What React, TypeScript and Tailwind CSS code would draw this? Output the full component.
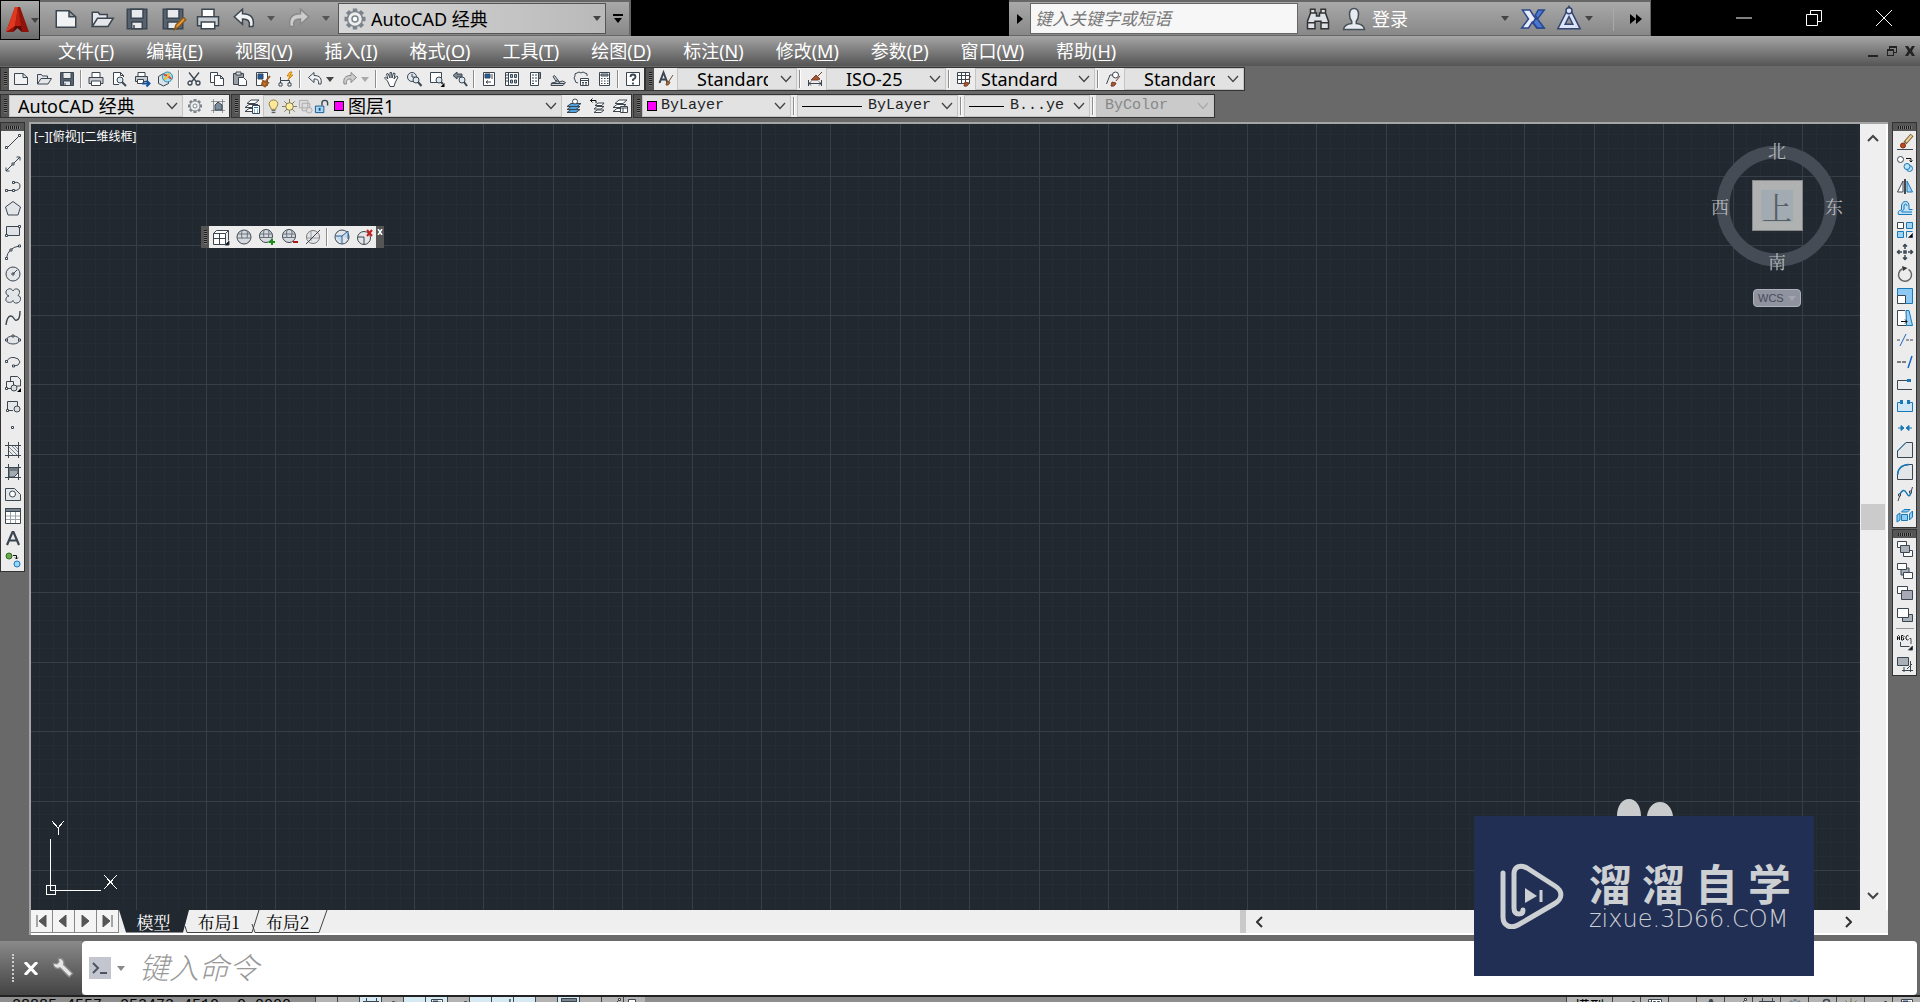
import { ReactNode } from 'react';

type IconProps = { name: string; size?: number };

const D = '#3b4650';
const B = '#1878b8';

// Icons are drawn on a 16x16 grid
const icons: Record<string, ReactNode> = {
    new: <path d="M1.500 2.500h8.500l4.500 4v7h-13zM10 2.500v4h4.500" fill="#f1f2f4" />,
    open: <path d="M1.500 13V3.500h4l1 1.500h5v2.500M1.500 13l3.500-5.500h10.500L12 13z" fill="#e4e6ea" />,
    save: <><path d="M1.500 1.500h13v13h-13z" fill="#56626e" /><path d="M4 1.500h8v6H4zM4.500 10h7v4.500h-7z" fill="#e8eaee" /><path d="M6 12v2" /></>,
    saveas: <><path d="M1.500 1.500h13v13h-13z" fill="#56626e" /><path d="M4 1.500h8v6H4zM4.500 10h7v4.500h-7z" fill="#e8eaee" /><path d="M9 15l1-3 5-5 1.500 1.500-5 5z" fill="#f0a030" stroke="#8a5a20" /></>,
    print: <><path d="M4 6V1.500h8V6" fill="#fff" /><path d="M1 6.500h14v6H1z" fill="#c9cdd2" /><path d="M3.500 10h9v4.500h-9z" fill="#fff" /></>,
    preview: <><path d="M8 13.500H2.500v-12h7l3 3V6M9.500 1.500v3h3" fill="#fff" /><circle cx="9" cy="9" r="3" fill="#dbe8f2" /><path d="M11 11l4 4" strokeWidth="2" /></>,
    publish: <><path d="M4 5V1.500h7V5" fill="#fff" /><path d="M1.500 5.500h12v5h-12z" fill="#c9cdd2" /><path d="M3.500 8.500h6v4h-6z" fill="#fff" /><path d="M8 12.500h7M12.500 9.500l3 3-3 3" stroke="#1353a0" strokeWidth="2" /></>,
    dwf: <><path d="M1.500 5.500l5-3 5 3v7l-5 2.500-5-2.500z" fill="#dbe3ea" /><circle cx="10.500" cy="6" r="5" fill="#a9dcec" stroke="#2b8ab0" /><path d="M7 4q4 0 7 4" stroke="#e2453c" strokeWidth="2" /><path d="M7 8q4-1 5-6" stroke="#e8c02c" strokeWidth="2" /></>,
    cut: <path d="M3 1.500l7.500 9.500M13 1.500L5.500 11M2 12a2 2 0 104 0 2 2 0 10-4 0M10 12a2 2 0 104 0 2 2 0 10-4 0" strokeWidth="1.300" />,
    copy: <><path d="M1.500 1.500h7v10h-7z" fill="#fff" /><path d="M5.500 4.500h6l3 3v7h-9zM11.500 4.500v3h3" fill="#fff" /></>,
    paste: <><path d="M1.500 2.500h10v11h-10z" fill="#9aa0a6" /><path d="M4 1h5v3H4z" fill="#ddd" /><path d="M6.500 6.500h5l3 3v5h-8z" fill="#fff" /></>,
    match: <><path d="M1.500 1.500h11v13h-11z" fill="#fff" /><path d="M3 3h5v5H3z" fill="#1e5aa5" /><path d="M15 5l-4 5M8 10l5 2-3 3.500-3-2z" stroke="#9c5a20" strokeWidth="2" fill="#c27a35" /></>,
    block: <><path d="M2.500 13V9.500h9V13M2.500 9.500V6" /><path d="M1 12h3v3H1zM10 12h3v3h-3z" fill="#fff" /><path d="M12 1l-3 4h3l-2 4 5-5h-3l2-3z" fill="#ffc83c" stroke="#d08010" /></>,
    undo: <path d="M1.500 6.500L7 1.500v3c6 0 8 3 7 8.500h-2.500c.5-3.500-.5-5-4.500-5v3.500z" fill="#f1f2f4" />,
    redo: <path d="M14.500 6.500L9 1.500v3c-6 0-8 3-7 8.500h2.500c-.5-3.500.5-5 4.500-5v3.500z" fill="#ccc" stroke="#888" />,
    hand: <path d="M4.500 10L1.500 7l1-1L5 8 3.500 3l1.500-.5L7 7V1.500h1.500L9 7l1.500-5 1.500.5L11 8l2.500-3 1.500 1-3 6-1 3.500H7z" fill="#fff" />,
    zoomrt: <><circle cx="6" cy="6" r="4.500" fill="#e2e9ef" /><path d="M6 3v3h3" /><circle cx="10" cy="9" r="3" fill="#dbe8f2" /><path d="M12 11l3.500 4" strokeWidth="2" /></>,
    zoomwin: <><path d="M1.500 1.500h11v10h-11z" fill="#fff" /><circle cx="10" cy="9" r="3" fill="#dbe8f2" /><path d="M12 11l2 2" strokeWidth="2" /><path d="M15.500 12v4h-4z" fill="#000" stroke="none" /></>,
    zoomprev: <><path d="M1 4.500L5 1v2h5v3H5v2z" fill="#7d8790" /><circle cx="10" cy="9" r="3" fill="#dbe8f2" /><path d="M12 11l3 4" strokeWidth="2" /></>,
    props: <><path d="M2.500 1.500h11v13h-11z" fill="#fff" /><path d="M4 3h5v4H4z" fill="#1e5aa5" /><path d="M11 3v5M5 11h5M7 9.500L5 11l2 1.500" /></>,
    center: <><path d="M1.500 1.500h13v13h-13zM4.500 1.500v13" fill="#fff" /><path d="M6.500 3.500h2v3h-2zM10.500 3.500h2v3h-2zM6.500 9h2v3h-2zM10.500 9h2v3h-2zM2 4h2M2 7h2M2 10h2" fill="#8fb5d8" /></>,
    palettes: <><path d="M3.500 1.500h8v13h-8z" fill="#fff" /><path d="M11.500 1.500h2v6h-2z" fill="#8a929a" /><path d="M5 4h2M8 4h2M5 7h2M8 7h2M5 10h2M8 10h2M5 12.500h2" /></>,
    sheets: <path d="M1 14.500h12l2.500-3-3-1.500-3 1-5-6.500-1.500 1 3.500 5.500-5 1zM2 12.500h12M6 9l4 3" fill="#ccd2d8" />,
    markup: <><path d="M4 2q2-2 4 0 2-2 4 0 3 0 2 3M4 2Q1 2 2 5q-2 2 0 4 0 3 3 3" /><path d="M7.500 7.500h8v7h-8zM7.500 9.500h8" fill="#fff" /><path d="M9 11.500h2M12 11.500h2M9 13h2M12 13h2" /></>,
    calc: <><path d="M3.500 1.500h10v13h-10z" fill="#fff" /><path d="M5 3h7v2H5z" fill="#9aa5b0" /><path d="M5 7.500h1.500M8 7.500h1.500M11 7.500h1.500M5 10h1.500M8 10h1.500M11 10h1.500M5 12.500h1.500M8 12.500h1.500M11 12.500h1.500" /></>,
    help: <><path d="M1.500 1.500h13v13h-13z" fill="#fff" /><path d="M5.500 6q0-2.500 2.500-2.500T10.500 6q0 1.500-2.500 2.500V10M8 11.500v2" strokeWidth="1.800" /></>,
    gear: <><path d="M8 1v2M8 13v2M1 8h2M13 8h2M3 3l1.500 1.500M11.500 11.500L13 13M13 3l-1.500 1.500M4.500 11.500L3 13" strokeWidth="3" stroke="#7b848c" /><circle cx="8" cy="8" r="5" fill="#eee" stroke="#7b848c" /><circle cx="8" cy="8" r="2" fill="#fff" stroke="#7b848c" /></>,
    workspace: <><path d="M1.500 3.500h13M1.500 12.500h13M3.500 1.500v13M12.500 1.500v13" strokeDasharray="1 1" /><path d="M5 12V7l3-3 4 3v5z" fill="#7d8c9a" /></>,
    layers: <><path d="M1 13.500l4-3h7l-4 3zM1 9.500l4-3h9l-4 3zM3 5.500L7 2h8l-4 3.500z" fill="#fff" /><path d="M8.500 7.500h7v8h-7z" fill="#fff" /><path d="M10 9.500h4M10 12h1M13 12h1M10 14h1M13 14h1" stroke={B} /></>,
    bulb: <><path d="M5.500 11q0-2-1.500-3.500Q2.500 5 4 3q1.500-2 4-2t4 2q1.500 2 0 4.500Q10.500 9 10.500 11z" fill="#ffe79a" stroke="#8a7a40" /><path d="M6 12.500h4M6 14.500h4" /></>,
    sun: <><path d="M8 0v16M0 8h16M2.500 2.500l11 11M13.500 2.500l-11 11" stroke="#7c7550" /><circle cx="8" cy="8" r="4" fill="#fff0a0" stroke="#7c7550" /></>,
    vpfreeze: <><path d="M1.500 1.500h9v8h-9zM4.500 4.500h8v8h-8z" fill="#ddd" stroke="#aaa" /><circle cx="12" cy="12" r="3" fill="#ddd" stroke="#aaa" /></>,
    unlock: <><path d="M8.500 7V4q0-2.500 3-2.500t3 2.500v3" strokeWidth="1.500" /><path d="M1.500 7.500h9v7h-9z" fill="#a6d7f7" stroke="#175487" /><path d="M6 9.500v3" stroke="#175487" strokeWidth="2" /></>,
    laycur: <><path d="M1 14.500l4-3h9l-4 3zM1 11.500l4-3h9l-4 3zM1 8.500l4-3h10l-4 3z" fill="#4ea3e0" /><circle cx="9" cy="3.500" r="2.500" fill="#fff" /></>,
    layprev: <><path d="M5 14.500l3-2.500h7l-3 2.500zM5 11l3-2.500h7L12 11zM6 7.500L9 5h6l-2 2.500z" fill="#fff" /><path d="M7 5V2.500H1M3.500 .5l-2 2 2 2" stroke="#111" /></>,
    laystate: <><path d="M1 13.500l4-3h7l-4 3zM1 9.500l4-3h9l-4 3zM3 5.500L7 2h8l-4 3.500z" fill="#fff" /><path d="M8.500 8.500h7v6h-7zM8.500 10h7M11 10v4" fill="#fff" /></>,
    textstyle: <><path d="M1.500 12L5.500 1.500 9.500 12M3 8.500h5" strokeWidth="2" /><path d="M15 4l-4 6M8 14l1-4 3 1q-1 4-4 3z" fill="#a46a3c" stroke="#79502e" /></>,
    dimstyle: <><path d="M1.500 9v6M14.500 9v6M2 12.500h12M4 10.500l-2 2 2 2M12 10.500l2 2-2 2" /><path d="M15 1l-4 4M4 9l5-5 4 4-2 1z" fill="#a4552c" stroke="#79402e" /></>,
    tablestyle: <><path d="M1.500 1.500h12v11h-12zM1.500 4.500h12M1.500 8.500h12M5.500 2v10M9.500 2v10" fill="#fff" /><path d="M15 5l-3 4M8 15l1-4 4 1q-1 4-5 3z" fill="#a4552c" stroke="#79402e" /></>,
    mlstyle: <><circle cx="10.500" cy="4" r="3" fill="#fff" /><path d="M1.500 13L5 4h3" /><path d="M15 5l-4 5M6 15l1-4 4 1q-1 4-5 3z" fill="#a4552c" stroke="#79402e" /></>,
    // draw toolbar
    line: <><path d="M2 14L14 2" /><path d="M.500 12.500h2v2h-2zM13.500 .500h2v2h-2z" fill="#fff" /></>,
    xline: <><path d="M1 15L15 1M1 11.500V15h3.500M11.500 1H15v3.500" /><path d="M7 7h2v2H7z" fill="#fff" /></>,
    pline: <><path d="M2 12.500h7M9 4.500q6-1 6 3.500t-6 4.500" /><path d="M.500 11.500h2v2h-2zM7.500 11.500h2v2h-2zM7.500 3.500h2v2h-2z" fill="#fff" /></>,
    polygon: <path d="M8 1.500l7.500 5.500L13 15H3L.5 7z" fill="#e3e6e9" />,
    rect: <><path d="M1.500 4.500h13v9h-13z" fill="#dfe3e7" /><path d="M.500 12.500h2v2h-2zM13.500 3.500h2v2h-2z" fill="#fff" /></>,
    arc: <><path d="M1.500 14Q3 4 14 2" /><path d="M.500 13.500h2v2h-2zM5 5h2v2H5zM13.500 1h2v2h-2z" fill="#fff" /></>,
    circle: <><circle cx="8" cy="8" r="7" fill="#e3e6e9" /><path d="M8 8l4-4M7 7h2v2H7z" fill="#fff" /></>,
    cloud: <path d="M8 3c1-3 7-3 6.500 1.500C14.500 6 13 7 13 7.500c4 1 3 7-1 7.500-2 .5-4-1-4-2.500C7 15 2 15 1 12.500.5 10 2 8 4 8 .5 7 0 3 2.500 1.500 5 0 7 1 8 3z" fill="#e3e6e9" />,
    spline: <path d="M1 15q1-9 5-9 1.500 0 3 2.500T12 10q3-1 3-9" strokeWidth="1.400" />,
    ellipse: <><ellipse cx="8" cy="8" rx="6.500" ry="4" fill="#e3e6e9" /><path d="M.500 7h2v2h-2zM7 3h2v2H7zM13.500 7h2v2h-2z" fill="#fff" /></>,
    ellarc: <><path d="M2 7q2-4 7-3.500T15 8q-1 4-6 4" /><path d="M.500 6.500h2v2h-2zM7.500 11h2v2h-2z" fill="#fff" /></>,
    insert: <><path d="M5.500 5V.500h7l3 3V10h-4M1.500 12.500v-7h7V9M2 12.500h4" /><circle cx="9" cy="12" r="3" fill="#ddd" /><path d="M.500 11.500h2v2h-2z" fill="#fff" /><path d="M16 12v4h-4z" fill="#000" stroke="none" /></>,
    mkblock: <><path d="M2.500 12.500v-9h10V8M2 12.500h6" fill="#e3e6e9" /><circle cx="12" cy="11" r="3" fill="#ddd" /><path d="M1.500 11.500h2v2h-2z" fill="#fff" /></>,
    point: <path d="M6.500 6.500h2v2h-2z" fill="#fff" />,
    hatch: <><path d="M0 3.500h16M0 13.500h16M3.500 0v16M13.500 0v16" /><path d="M4 5l8 8M4 9l4 4M7 4l6 6M10 4l3 3" stroke="#7f878e" /></>,
    gradient: <><path d="M0 3.500h16M0 13.500h16M3.500 0v16M13.500 0v16" /><path d="M4 4h9v5l-4 4H4z" fill="#a3abb2" /><path d="M4 4h9v3H4z" fill="#6f7a84" stroke="none" /></>,
    region: <><path d="M.500 2.500h9l6 6v6H.500z" fill="#e3e6e9" /><circle cx="7.500" cy="8" r="3" fill="#fff" /></>,
    table: <><path d="M.500 .500h15v15H.500z" fill="#fff" /><path d="M1 8h14M1 11.500h14M5.500 4v11M10.500 4v11" stroke="#9aa1a8" /><path d="M.500 .500h15v3H.500z" fill="#78838d" /></>,
    mtext: <path d="M2 15L7.500 2h1L14 15M4 10.500h8" strokeWidth="2.200" />,
    addsel: <><circle cx="4" cy="4" r="3" fill="#6aa84f" stroke="#2f6b1c" /><circle cx="12" cy="12" r="3" fill="#9ad6f8" stroke={B} /><path d="M8 3.500h3.500V7M10 5.500L11.500 7 13 5.500" stroke="#111" /></>,
    // modify toolbar
    erase: <><path d="M0 15.500h16" /><path d="M15 1L8 9" stroke="#7a5a34" strokeWidth="4" /><path d="M14.500 1.500L9 8" stroke="#ecd29a" strokeWidth="2" /><circle cx="6" cy="11.500" r="2.500" fill="#c0481f" stroke="#7b3010" /></>,
    mcopy: <><circle cx="3.500" cy="3.500" r="3" fill="#fff" /><path d="M9 2.500h5V6M12.500 4.500L14 6l1.500-1.500" stroke="#111" /><circle cx="12.500" cy="12.500" r="3" fill="#bfe3fa" stroke={B} /><circle cx="10" cy="10.500" r="3" fill="#bfe3fa" stroke={B} /></>,
    mirror: <><path d="M6 3v11H.500z" fill="#fff" /><path d="M10 3v11h5.500z" fill="#9fd3f5" stroke={B} /><path d="M8 1v15" stroke="#111" strokeWidth="1.500" /></>,
    offset: <path d="M15 14.500H1.500q-1.500-4 3-4.500V6Q5 1.500 8.500 1.500T12 6v3.500h3.500M15 12H5q-1.500 0 2-2.500V6q0-2 1.500-2T10 6" stroke={B} fill="#bfe3fa" />,
    array: <><path d="M.500 .500h6v6h-6z" fill="#fff" /><path d="M9.500 .500h6v6h-6zM.500 9.500h6v6h-6z" fill="#9fd3f5" stroke={B} /><path d="M9.500 15.500v-6h6" stroke={B} /><path d="M15.500 11.500v4h-4z" fill="#000" /></>,
    move: <path d="M8 0v5M8 11v5M0 8h5M11 8h5M6 2.500L8 .5l2 2M6 13.500l2 2 2-2M2.500 6L.5 8l2 2M13.500 6l2 2-2 2M7 7h2v2H7z" strokeWidth="1.500" />,
    rotate: <><path d="M5.500 2.800a6.500 6.500 0 106 .5" strokeWidth="1.500" stroke="#666" /><path d="M5 0l5.500 2L6 5z" fill="#333" stroke="none" /></>,
    scale: <><path d="M.500 .500h15v15h-15z" fill="#8dc9f2" stroke={B} /><path d="M.500 7.500h8v8h-8z" fill="#fff" /></>,
    stretch: <><path d="M8 .500H.500v15h9" fill="#fff" /><path d="M9 .500h3l3.500 15h-6z" fill="#9fd3f5" stroke={B} /><path d="M4 11.500h6M8 9.500l2 2-2 2" stroke="#111" /></>,
    trim: <><path d="M0 8h4M9 8h7" strokeDasharray="3 1" /><path d="M3 14l6-12" stroke="#1667c0" /></>,
    extend: <><path d="M0 8h10" strokeDasharray="4 1" stroke="#111" /><path d="M11 14l4-12" stroke="#1667c0" strokeWidth="1.500" /></>,
    breakpt: <><path d="M15 13.500H.500v-9h12" /><path d="M10 3h4v3h-4z" fill={B} stroke="none" /></>,
    breakk: <><path d="M3 4.500H.500v9h15v-9H13" fill="#cfe6f6" stroke={B} /><path d="M3 2h3v4H3zM10 2h3v4h-3z" fill={B} stroke="none" /></>,
    join: <path d="M1 8h5M10 8h5M4 5.500L7 8l-3 2.500zM12 5.500L9 8l3 2.500z" fill={B} stroke={B} />,
    chamfer: <><path d="M.500 9v6.500h15V.500H9L.500 9z" fill="#e3e6e9" /><path d="M.500 9L9 .500" stroke={B} /></>,
    fillet: <><path d="M.500 11v4.500h15V.500H12Q1 1 .500 11z" fill="#e3e6e9" /><path d="M.500 11Q1 1 12 .500" stroke={B} strokeWidth="1.500" /></>,
    blend: <><path d="M1 15L3 9M14 6l1.500-5" /><path d="M2.500 9q4-8 7-2t4.500-1" stroke={B} strokeWidth="1.500" /><path d="M1.500 8h2v2h-2zM12.500 5h2v2h-2z" fill="#fff" /></>,
    explode: <path d="M4.500 6.500h6v6h-6zM4.500 4L7 1.500h6L10.500 4zM12.500 6L15.500 3v6l-3 3zM0 7l3-2v7l-3 2z" fill="#8dcdf5" stroke={B} />,
    // draw order toolbar
    front: <><path d="M.500 .500h9v6h-9zM6.500 9.500h9v6h-9z" fill="#fff" /><path d="M3.500 4.500h9v7h-9z" fill="#a9b0b7" /></>,
    back: <><path d="M4 5h8v7H4z" fill="#a9b0b7" /><path d="M.500 .500h9v6h-9zM6.500 9.500h9v6h-9z" fill="#fff" /></>,
    above: <><path d="M.500 1.500h10v7h-10z" fill="#fff" /><path d="M4.500 5.500h11v9h-11z" fill="#a8a9b4" /></>,
    under: <><path d="M5.500 7.500h10v7h-10z" fill="#a9b0b7" /><path d="M.500 1.500h11v9h-11z" fill="#fff" /></>,
    abc: <><path d="M.500 6V2.500l1-1 1 1V6M.500 4h2M4.500 1.500V6H6l1-1-1-1.500L7 2.500l-1-1zM11.500 2l-1-.5-1.500 1V5l1.500 1 1-.5" stroke="#111" /><path d="M3.500 8v4.500h9M12.500 4.500H14V10" /><path d="M15.500 12v4h-4z" fill="#000" /></>,
    hatchback: <><path d="M.500 1.500h11v8h-11z" fill="#a9b0b7" /><path d="M5 14.500h11M13.500 5v11M7 11v5M10 13l5-5" /></>,
    // mesh toolbar
    box: <><path d="M.500 4.500h12v11H.500zM.500 4.500l3-3h12l-3 3M15.500 1.500v10M6.500 4.500v11M.500 9.500h12" fill="#fff" /><path d="M16 12v4h-4z" fill="#000" /></>,
    sphere: <><circle cx="8" cy="8" r="7" fill="#d6dade" /><path d="M2 5h12M1 9h14M6 1.500q-1 4 0 8M11 2q1 3 0 7" stroke="#66707a" /></>,
    sphereAdd: <><circle cx="7" cy="7" r="6.500" fill="#d6dade" /><path d="M1 5h12M1 8.500h12M5 1q-1 4 0 8M9.500 1q1 3 0 7" stroke="#66707a" /><path d="M13 10v6M10 13h6" stroke="#149014" strokeWidth="2" /></>,
    sphereSub: <><circle cx="7" cy="7" r="6.500" fill="#d6dade" /><path d="M1 5h12M1 8.500h12M5 1q-1 4 0 8M9.500 1q1 3 0 7" stroke="#66707a" /><path d="M11 13h5" stroke="#b01818" strokeWidth="2" /></>,
    sphereCut: <><circle cx="8" cy="8" r="6.500" fill="#e3e5e8" stroke="#777" /><path d="M2 9h12M6 2v10" stroke="#999" /><path d="M1 15L15 1" /></>,
    crease: <><circle cx="8" cy="8" r="7" fill="#e3e5e8" /><path d="M1 7h7v8M8 7l6-5V10" stroke="#2d5f95" fill="#c5d9ee" /></>,
    creaseDel: <><circle cx="7" cy="9" r="6.500" fill="#e3e5e8" /><path d="M1 8h6v7" /><path d="M10 1l5 6M15 1l-5 6" stroke="#c42020" strokeWidth="2" /></>,
    user: <path d="M8 1q3 0 3 4 0 3-1.500 4.500V11q5 .5 5.500 4H1q.5-3.500 5.500-4V9.500Q5 8 5 5q0-4 3-4z" fill="#e8ecf2" stroke="#455058" />,
    binoculars: <path d="M3 4V1.500h3V4h1v2h2V4h1V1.500h3V4l2 5.500v5h-5v-5H6v5H1v-5zM1 10.500h5M10 10.500h5M3 4h3M10 4h3" fill="#dfe3e8" stroke="#333" />,
    exchange: <><path d="M1 2h5l2.500 4L15 14h-4.500L7.500 10 5 14H.500L5 8z" fill="#e9eefa" stroke="#2a478e" /><path d="M15.500 2h-4L9.500 5.500 11 8zM9.500 8L8 10.500l3 3.500h4.500L11 8z" fill="#4a78d0" stroke="#2a478e" /></>,
    a360: <><path d="M8 3L3 13h10z" strokeWidth="4" stroke="#34456e" /><path d="M8 3L3 13h10z" strokeWidth="2" stroke="#dce4f8" /><circle cx="8" cy="2.500" r="2" fill="#dce4f8" stroke="#34456e" /></>,
    wrench: <path d="M1 4.500L3.500 5 5 3.500 4.500 1q3-.5 4 2 .5 1.500 0 2.500L15 12l-2.500 2.500L6 8Q3.500 9 2 7.500 .5 6 1 4.500z" fill="#e6e6e6" stroke="#888" />,
};

function Icon({ name, size = 16 }: IconProps) {
    return (
        <svg width={size} height={size} viewBox="0 0 16 16" fill="none" stroke={D} strokeWidth="1" className="shrink-0 overflow-visible">
            {icons[name]}
        </svg>
    );
}

function ToolButton({ name }: { name: string }) {
    return (
        <button type="button" aria-label={name} className="flex h-[22px] w-[23px] shrink-0 items-center justify-center">
            <Icon name={name} />
        </button>
    );
}

function Caret({ className = 'text-[#444]' }: { className?: string }) {
    return (
        <svg width="8" height="5" viewBox="0 0 8 5" className={`shrink-0 ${className}`}>
            <path d="M0 0h8L4 5z" fill="currentColor" />
        </svg>
    );
}

function Chevron({ className = 'text-[#444]' }: { className?: string }) {
    return (
        <svg width="12" height="8" viewBox="0 0 12 8" className={`pointer-events-none shrink-0 ${className}`} fill="none" stroke="currentColor">
            <path d="M1 1l5 5.500L11 1" strokeWidth="1.300" />
        </svg>
    );
}

function Grip({ vertical = false }: { vertical?: boolean }) {
    return vertical ? (
        <div className="flex h-2 w-full items-center justify-center bg-[#555]">
            <div className="h-[3px] w-[14px] bg-[repeating-linear-gradient(90deg,#1c1c1c_0_1px,#777_1px_2px)]" />
        </div>
    ) : (
        <div className="flex w-2 shrink-0 items-center justify-center self-stretch bg-[#555]">
            <div className="h-[14px] w-[3px] bg-[repeating-linear-gradient(#1c1c1c_0_1px,#777_1px_2px)]" />
        </div>
    );
}

function Divider() {
    return <div className="mx-[2px] h-[18px] w-[2px] shrink-0 border-l border-[#8d8d8d] bg-white" />;
}

function Bar({ children }: { children: ReactNode }) {
    return <div className="flex h-6 shrink-0 items-center border border-[#333] bg-[#ececec]">{children}</div>;
}

type ComboProps = { label: string; value: string; width: string; text: string; before?: ReactNode; disabled?: boolean };

function Combo({ label, value, width, text, before, disabled }: ComboProps) {
    return (
        <div className={`flex h-[22px] shrink-0 items-center border border-[#c4c4c4] pr-1 ${width} ${disabled ? 'bg-[#cacaca]' : 'bg-[#e2e2e2]'}`}>
            {before}
            <select aria-label={label} disabled={disabled} className={`h-5 min-w-0 flex-1 appearance-none overflow-hidden bg-transparent p-0 outline-none ${text}`}>
                <option>{value}</option>
            </select>
            <Chevron className={disabled ? 'text-[#aaa]' : 'text-[#444]'} />
        </div>
    );
}

const menus = [
    ['文件', 'F'], ['编辑', 'E'], ['视图', 'V'], ['插入', 'I'], ['格式', 'O'], ['工具', 'T'],
    ['绘图', 'D'], ['标注', 'N'], ['修改', 'M'], ['参数', 'P'], ['窗口', 'W'], ['帮助', 'H'],
];

const standardGroups = [
    ['new', 'open', 'save'],
    ['print', 'preview', 'publish', 'dwf'],
    ['cut', 'copy', 'paste', 'match', 'block'],
    ['undo', 'redo'],
    ['hand', 'zoomrt', 'zoomwin', 'zoomprev'],
    ['props', 'center', 'palettes', 'sheets', 'markup', 'calc'],
    ['help'],
];

const drawTools = [
    'line', 'xline', 'pline', 'polygon', 'rect', 'arc', 'circle', 'cloud', 'spline', 'ellipse',
    'ellarc', 'insert', 'mkblock', 'point', 'hatch', 'gradient', 'region', 'table', 'mtext', 'addsel',
];

const modifyTools = [
    'erase', 'mcopy', 'mirror', 'offset', 'array', 'move', 'rotate', 'scale', 'stretch', 'trim',
    'extend', 'breakpt', 'breakk', 'join', 'chamfer', 'fillet', 'blend', 'explode',
];

const uiFont = "font-['Noto_Sans','Noto_Sans_CJK_SC',sans-serif]";
const songFont = "font-['Liberation_Mono','Noto_Sans_CJK_SC',monospace]";

function TitleBar() {
    return (
        <header className="flex h-[36px] items-stretch bg-black">
            <button type="button" aria-label="AutoCAD" className="z-10 flex h-10 w-10 shrink-0 items-center gap-px border border-black bg-linear-to-b from-[#aaa] to-[#6c6c6c] pl-1">
                <svg width="25" height="28" viewBox="0 0 25 28">
                    <path d="M10 1h5l9 25h-7l-4.500-4L8 26H1z" fill="#8f130b" />
                    <path d="M10 1h3l-3 19L1 26z" fill="#e0371f" />
                    <path d="M13 1l3 19-6 0z" fill="#b81f10" />
                    <path d="M8 26l2-6h6l1 6-4.500-4z" fill="#5c0a05" />
                </svg>
                <Caret />
            </button>
            <div className="flex h-[36px] w-[591px] shrink-0 items-center border-t-2 border-r-2 border-b border-[#666] bg-linear-to-b from-[#a9a9a9] to-[#888]">
                <div className="flex w-[298px] items-center justify-between pr-2 pl-[14px]">
                    {['new', 'open', 'save', 'saveas', 'print', 'undo'].map((name) => (
                        <button key={name} type="button" aria-label={name} className="flex size-6 items-center justify-center">
                            <Icon name={name} size={24} />
                        </button>
                    ))}
                    <Caret className="text-[#555]" />
                    <button type="button" aria-label="redo" className="flex size-6 items-center justify-center">
                        <Icon name="redo" size={24} />
                    </button>
                    <Caret className="text-[#555]" />
                </div>
                <div className="flex h-[31px] w-[268px] items-center gap-1 border border-[#555] bg-linear-to-r from-[#d8d8d8] to-[#b9b9b9] px-1">
                    <Icon name="gear" size={24} />
                    <select aria-label="工作空间" className={`h-7 min-w-0 flex-1 appearance-none bg-transparent text-[18px] leading-6 text-black ${uiFont}`}>
                        <option>AutoCAD 经典</option>
                    </select>
                    <Caret />
                </div>
                <button type="button" aria-label="自定义快速访问工具栏" className="flex flex-1 flex-col items-center gap-[2px]">
                    <span className="h-[2px] w-[10px] bg-black" />
                    <Caret className="text-black" />
                </button>
            </div>
            <div className="min-w-0 flex-1" />
            <div className="flex h-[36px] w-[642px] shrink-0 items-center border-t-2 border-r border-b border-[#666] bg-linear-to-b from-[#a9a9a9] to-[#888]">
                <button type="button" aria-label="展开" className="flex w-[21px] items-center justify-center">
                    <svg width="6" height="10" viewBox="0 0 6 10"><path d="M0 0l6 5-6 5z" /></svg>
                </button>
                <input type="text" aria-label="搜索" placeholder="键入关键字或短语" className={`h-[31px] w-[268px] border border-[#666] bg-[#f7f7f7] px-1 text-[17px] italic placeholder:text-[#777] ${uiFont}`} />
                <div className="flex flex-1 items-center pl-2">
                    <button type="button" aria-label="搜索"><Icon name="binoculars" size={24} /></button>
                    <button type="button" className={`ml-3 flex items-center gap-[6px] text-[18px] leading-6 text-white ${uiFont}`}>
                        <Icon name="user" size={24} />
                        登录
                    </button>
                    <Caret className="ml-auto text-[#444]" />
                    <button type="button" aria-label="Exchange" className="ml-3"><Icon name="exchange" size={24} /></button>
                    <button type="button" aria-label="A360" className="ml-3 flex items-center gap-1"><Icon name="a360" size={24} /><Caret /></button>
                    <span className="ml-5 h-6 w-px bg-[#aaa]" />
                    <button type="button" aria-label="更多" className="mr-2 ml-4">
                        <svg width="12" height="10" viewBox="0 0 12 10"><path d="M0 0l6 5-6 5zM6 0l6 5-6 5z" /></svg>
                    </button>
                </div>
            </div>
            <div className="flex w-[269px] shrink-0 items-center justify-between pr-7 pl-[85px] text-white">
                {['M0 8h16', 'M.5 4.500h11v11H.5zM4.500 4V.500h11v11h-4', 'M0 0l16 16M16 0L0 16'].map((d, i) => (
                    <button key={d} type="button" aria-label={['最小化', '还原', '关闭'][i]}>
                        <svg width="16" height="16" viewBox="0 0 16 16" fill="none" stroke="currentColor"><path d={d} /></svg>
                    </button>
                ))}
            </div>
        </header>
    );
}

function MenuBar() {
    return (
        <nav className={`flex h-[30px] items-center bg-linear-to-b from-[#a6a6a6] to-[#555] pl-[42px] text-[18px] text-white ${uiFont}`}>
            {menus.map(([label, key]) => (
                <button key={key} type="button" className="px-4 leading-6 whitespace-nowrap">
                    {label}(<span className="underline underline-offset-2">{key}</span>)
                </button>
            ))}
            <div className="ml-auto flex items-center gap-[6px] pr-1">
                {['M0 10h10v2H0z', 'M3 1h8v7H8v3H1V4h2zM2 6v4h5V6zM4 4h4v3h2V3H4z', 'M1 1h3l2 3 2-3h3L8 6l3 5H8L6 8l-2 3H1l3-5z'].map((d, i) => (
                    <button key={d} type="button" aria-label={['最小化图形', '还原图形', '关闭图形'][i]}>
                        <svg width="12" height="12" viewBox="0 0 12 12" fill="#222" fillRule="evenodd"><path d={d} /></svg>
                    </button>
                ))}
            </div>
        </nav>
    );
}

function Toolbars() {
    const small = `text-[18px] leading-5 text-black ${uiFont}`;
    const song = `text-[15px] leading-5 text-[#222] ${songFont}`;
    return (
        <div className="flex flex-col gap-[3px] pt-px">
            <div className="flex">
                <Bar>
                    <Grip />
                    {standardGroups.map((group, i) => (
                        <div key={group[0]} className="flex items-center">
                            {i > 0 && <Divider />}
                            {group.map((name) => (
                                <div key={name} className="flex items-center">
                                    <ToolButton name={name} />
                                    {(name === 'undo' || name === 'redo') && <div className="w-3"><Caret className={name === 'undo' ? 'text-[#444]' : 'text-[#aaa]'} /></div>}
                                </div>
                            ))}
                        </div>
                    ))}
                </Bar>
                <Bar>
                    <Grip />
                    <ToolButton name="textstyle" />
                    <Combo label="文字样式" value="Standard" width="w-[120px]" text={`pl-[19px] mr-3 ${small}`} />
                    <Divider />
                    <ToolButton name="dimstyle" />
                    <Combo label="标注样式" value="ISO-25" width="w-[120px]" text={`pl-[19px] ${small}`} />
                    <Divider />
                    <ToolButton name="tablestyle" />
                    <Combo label="表格样式" value="Standard" width="w-[120px]" text={`pl-[5px] ${small}`} />
                    <Divider />
                    <ToolButton name="mlstyle" />
                    <Combo label="多重引线样式" value="Standard" width="w-[120px]" text={`pl-[19px] mr-3 ${small}`} />
                </Bar>
            </div>
            <div className="flex gap-px">
                <Bar>
                    <Grip />
                    <Combo label="工作空间" value="AutoCAD 经典" width="w-[174px]" text={`pl-2 ${small}`} />
                    <ToolButton name="gear" />
                    <ToolButton name="workspace" />
                </Bar>
                <Bar>
                    <Grip />
                    <ToolButton name="layers" />
                    <Combo
                        label="图层"
                        value="图层1"
                        width="w-[299px]"
                        text={`pl-1 ${small}`}
                        before={
                            <div className="flex items-center gap-px pl-[2px]">
                                {['bulb', 'sun', 'vpfreeze', 'unlock'].map((name) => <Icon key={name} name={name} size={15} />)}
                                <span className="ml-1 size-[10px] border border-black bg-[#f0f]" />
                            </div>
                        }
                    />
                    {['laycur', 'layprev', 'laystate'].map((name) => <ToolButton key={name} name={name} />)}
                </Bar>
                <Bar>
                    <Grip />
                    <Combo label="颜色" value="ByLayer" width="w-[149px]" text={`pl-1 ${song}`} before={<span className="ml-1 size-[10px] border border-black bg-[#f0f]" />} />
                    <Divider />
                    <Combo label="线型" value="ByLayer" width="w-[161px]" text={`pl-[6px] ${song}`} before={<span className="ml-1 h-px w-[60px] bg-black" />} />
                    <Divider />
                    <Combo label="线宽" value="B...ye" width="w-[126px]" text={`pl-[6px] ${song}`} before={<span className="ml-1 h-px w-[35px] bg-black" />} />
                    <Divider />
                    <Combo label="打印样式" value="ByColor" width="w-[118px]" text={`pl-2 text-[15px] leading-5 text-[#888] ${songFont}`} disabled />
                </Bar>
            </div>
        </div>
    );
}

const PITCH = 69.4;

function gridLines(offset: number, count: number) {
    return Array.from({ length: count }, (_, i) => ({
        at: Math.round(offset + ((i - 5) * PITCH) / 5) + 0.5,
        major: i % 5 === 0,
    }));
}

function GridLines() {
    const xs = gridLines(36, 200);
    const ys = gridLines(52, 120);
    return (
        <svg className="absolute inset-0 h-full w-full" aria-hidden="true">
            {[false, true].map((major) => (
                <g key={String(major)} stroke={major ? '#363e48' : '#242c36'}>
                    {xs.filter((l) => l.major === major).map((l) => <line key={`x${l.at}`} x1={l.at} x2={l.at} y1="0" y2="100%" />)}
                    {ys.filter((l) => l.major === major).map((l) => <line key={`y${l.at}`} y1={l.at} y2={l.at} x1="0" x2="100%" />)}
                </g>
            ))}
        </svg>
    );
}

function MeshToolbar() {
    return (
        <div className="absolute top-[102px] left-[170px] flex h-[22px] items-center bg-[#ececec]">
            <Grip />
            {['box', 'sphere', 'sphereAdd', 'sphereSub', 'sphereCut'].map((name) => <ToolButton key={name} name={name} />)}
            <Divider />
            {['crease', 'creaseDel'].map((name) => <ToolButton key={name} name={name} />)}
            <button type="button" aria-label="关闭" className="flex w-2 items-start justify-center self-stretch bg-[#555] pt-[3px]">
                <svg width="6" height="6" viewBox="0 0 6 6" stroke="#fff" strokeWidth="1.500"><path d="M1 0l4 6M5 0L1 6" /></svg>
            </button>
        </div>
    );
}

function ViewCube() {
    return (
        <div className="absolute top-[14px] right-[17px] flex w-[132px] flex-col items-center font-['Noto_Serif_CJK_SC','Noto_Sans_CJK_SC',serif] text-[18px] leading-6 text-[#b4b7bb]">
            <svg width="120" height="120" viewBox="0 0 120 120" className="absolute top-[8px] left-[6px]">
                <circle cx="60" cy="60" r="54" fill="none" stroke="#454c56" strokeWidth="13" />
            </svg>
            <span className="relative">北</span>
            <div className="relative my-[18px] flex w-full items-center justify-between">
                <span>西</span>
                <div className="flex size-[51px] items-center justify-center border border-[#888] bg-[#b0b1b1]">
                    <div className="flex size-8 items-center justify-center bg-[#a2abb2] text-[30px] leading-8 text-[#5a5f64]">上</div>
                </div>
                <span>东</span>
            </div>
            <span className="relative">南</span>
            <button type="button" className="relative mt-4 flex h-[18px] w-12 items-center justify-between rounded border border-[#aeb0bb] bg-[#8f929f] px-1 font-['Liberation_Sans',sans-serif] text-[11px] leading-4 text-[#474b57]">
                WCS
                <Caret className="text-[#a3a6b2]" />
            </button>
        </div>
    );
}

function UcsIcon() {
    return (
        <svg width="80" height="80" viewBox="0 0 80 80" className="absolute bottom-[7px] left-[12px] overflow-visible" fill="none" stroke="#fff" shapeRendering="crispEdges">
            <path d="M7.500 16v51h50M3.500 62.500h9v9h-9zM9 -2l6 7v7M21 -2l-6 7M61 52l13 14M74 52L61 66" />
        </svg>
    );
}

function LayoutTabs() {
    return (
        <div className="flex h-[25px] shrink-0 border-b-2 border-white bg-[#efefef]">
            <div className="flex h-[23px]">
                {['M1 0v12M10 0v12L3 6z', 'M8 0v12L1 6z', 'M2 0v12l7-6z', 'M1 0v12l7-6zM10 0v12'].map((d, i) => (
                    <button key={d} type="button" aria-label={['第一个', '上一个', '下一个', '最后一个'][i]} className="flex w-[22px] items-center justify-center border-r border-b border-[#888] bg-[#f4f4f4]">
                        <svg width="11" height="12" viewBox="0 0 11 12" fill="#555" stroke="#555" strokeWidth="1"><path d={d} /></svg>
                    </button>
                ))}
            </div>
            <div className="relative flex h-[23px] font-['Noto_Serif_CJK_SC','Noto_Sans_CJK_SC',serif] text-[17px] leading-[22px]">
                <svg width="210" height="23" viewBox="0 0 210 23" className="absolute inset-0">
                    <path d="M0 0h70l-6 22.500H7z" fill="#212830" />
                    <path d="M66 16l2 6.500h65L140 0M133 14l3 8.500h64L208 0" fill="none" stroke="#444" />
                </svg>
                <button type="button" className="relative w-[69px] text-white">模型</button>
                <button type="button" className="relative w-[69px] pr-2 text-black">布局1</button>
                <button type="button" className="relative w-[69px] pr-2 text-black">布局2</button>
            </div>
            <div className="ml-auto flex h-[23px] w-[648px] items-center border-l-[6px] border-[#c9c9c9] pr-9 pl-[10px]">
                <svg width="7" height="12" viewBox="0 0 7 12" fill="none" stroke="#333" strokeWidth="2"><path d="M6 1L1 6l5 5" /></svg>
                <svg width="7" height="12" viewBox="0 0 7 12" fill="none" stroke="#333" strokeWidth="2" className="ml-auto"><path d="M1 1l5 5-5 5" /></svg>
            </div>
        </div>
    );
}

function VerticalTools({ tools }: { tools: string[] }) {
    return (
        <div className="flex flex-col items-center border border-[#333] bg-[#ececec]">
            <Grip vertical />
            {tools.map((name) => name === '-' ? <div key={name} className="my-[2px] h-px w-[18px] bg-[#999]" /> : <ToolButton key={name} name={name} />)}
        </div>
    );
}

function CommandLine() {
    return (
        <div className="flex h-[54px] shrink-0 items-stretch">
            <div className="flex w-[82px] shrink-0 items-center justify-between bg-linear-to-b from-[#8a8a8a] to-[#444] pr-2 pl-3">
                <span className="h-7 border-l-2 border-dotted border-[#ccc]" />
                <button type="button" aria-label="关闭命令行" className="mr-1">
                    <svg width="14" height="13" viewBox="0 0 14 13" stroke="#fff" strokeWidth="3"><path d="M1 0l12 13M13 0L1 13" /></svg>
                </button>
                <button type="button" aria-label="自定义"><Icon name="wrench" size={22} /></button>
            </div>
            <label className="mr-[3px] flex min-w-0 flex-1 items-center rounded-sm bg-white pl-[7px]">
                <svg width="22" height="22" viewBox="0 0 22 22" className="shrink-0">
                    <path d="M0 0h22v22H0z" fill="#c3c6ce" />
                    <path d="M4 6l5 5-5 5M11 16h7" fill="none" stroke="#4b5563" strokeWidth="2" />
                </svg>
                <Caret className="ml-[6px] text-[#888]" />
                <input type="text" placeholder="键入命令" aria-label="命令" className={`ml-[14px] h-12 min-w-0 flex-1 pb-[2px] text-[30px] font-light italic outline-none placeholder:text-[#999] ${uiFont}`} />
            </label>
        </div>
    );
}

const statusLeft = ['', '', 'hatch', 'pline', '', 'props', 'rect', '', 'spline', '', 'point', 'table', '', 'line', 'copy'];
const statusRight = ['rect', 'center', '', 'mtext', 'line', 'hatch', 'gear', 'unlock', 'sun', 'rect', 'props'];

function StatusBar() {
    return (
        <footer className="flex h-7 items-stretch border-t-2 border-[#222] bg-[#8e8e8e] font-['Liberation_Mono',monospace] text-[15px] text-black">
            <div className="w-[315px] shrink-0 pl-3 leading-[18px] whitespace-nowrap">28885.4557, 253473.4510, 0.0000</div>
            {statusLeft.map((name, i) => (
                <button key={i} type="button" aria-label={`状态 ${i + 1}`} className={`flex w-[22px] shrink-0 justify-center border-l border-[#444] pt-px ${[2, 4, 5, 7, 8, 9, 11].includes(i) ? 'bg-[#d6eaf3]' : 'bg-[#b4b4b4]'}`}>
                    {name && <Icon name={name} />}
                </button>
            ))}
            <div className="ml-auto flex">
                <button type="button" className={`flex w-[46px] items-start justify-center border-l border-[#444] bg-[#b4b4b4] text-[15px] leading-[18px] ${uiFont}`}>模型</button>
                {statusRight.map((name, i) => (
                    <button key={i} type="button" aria-label={`视图 ${i + 1}`} className="flex w-7 shrink-0 justify-center border-l border-[#444] bg-[#b4b4b4] pt-px">
                        {name && <Icon name={name} />}
                    </button>
                ))}
            </div>
        </footer>
    );
}

function Watermark() {
    return (
        <div className="absolute right-[106px] bottom-[26px] z-20 h-[160px] w-[340px] bg-[#212f55]">
            <svg width="60" height="18" viewBox="0 0 60 18" className="absolute -top-[18px] left-[140px]">
                <path d="M3 18C3 8 8 1 15 1s12 7 12 17zM33 18C34 10 39 4 46 4s12 6 13 14z" fill="#c9cbcd" />
            </svg>
            <div className="flex h-full items-center gap-[25px] pl-[26px] text-[#cdd0d3]">
                <svg width="64" height="66" viewBox="0 0 64 66" fill="none" stroke="currentColor" strokeLinejoin="round" strokeLinecap="round" className="shrink-0">
                    <path d="M3 10v44c0 9 8 12 15 8l36-21c9-5 9-13 1-18L27 5c-7-4-13-1-13 6v34q0 6 5 6 4 0 4-4" strokeWidth="5" />
                    <path d="M25 25v15l12-7z" fill="currentColor" stroke="none" />
                    <path d="M41 27v12" strokeWidth="3" strokeLinecap="butt" />
                </svg>
                <div className="flex flex-col">
                    <div className="flex gap-[10px] font-['Noto_Sans_CJK_SC',sans-serif] text-[43px] leading-[46px] font-bold whitespace-nowrap">
                        {['溜', '溜', '自', '学'].map((char, i) => <span key={i}>{char}</span>)}
                    </div>
                    <div className="font-['DejaVu_Sans',sans-serif] text-[24px] leading-7 font-extralight whitespace-nowrap">zixue.3D66.COM</div>
                </div>
            </div>
        </div>
    );
}

export default function App() {
    return (
        <div className="relative flex h-screen flex-col overflow-hidden bg-[#696969]">
            <TitleBar />
            <MenuBar />
            <Toolbars />
            <main className="mt-1 flex min-h-0 flex-1">
                <div className="w-[25px] shrink-0">
                    <VerticalTools tools={drawTools} />
                </div>
                <section className="ml-1 flex min-w-0 flex-1 flex-col border-t-2 border-l-2 border-[#a5a5a5]">
                    <div className="flex min-h-0 flex-1">
                        <div className="relative min-w-0 flex-1 overflow-hidden bg-[#212830]">
                            <GridLines />
                            <div className={`absolute top-1 left-[3px] text-[12px] leading-[18px] text-white ${uiFont}`}>[−][俯视][二维线框]</div>
                            <MeshToolbar />
                            <ViewCube />
                            <UcsIcon />
                        </div>
                        <div className="flex w-7 shrink-0 flex-col items-center justify-between border-r-2 border-white bg-[#efefef] py-[10px]">
                            <svg width="12" height="8" viewBox="0 0 12 8" fill="none" stroke="#444" strokeWidth="2"><path d="M1 7l5-5 5 5" /></svg>
                            <div className="h-[26px] w-6 bg-[#cbcbcb]" />
                            <svg width="12" height="8" viewBox="0 0 12 8" fill="none" stroke="#444" strokeWidth="2"><path d="M1 1l5 5 5-5" /></svg>
                        </div>
                    </div>
                    <LayoutTabs />
                </section>
                <div className="mr-[3px] ml-1 flex w-[25px] shrink-0 flex-col gap-px">
                    <VerticalTools tools={modifyTools} />
                    <VerticalTools tools={['front', 'back', 'above', 'under', '-', 'abc', 'hatchback']} />
                </div>
            </main>
            <div className="h-[6px] shrink-0" />
            <CommandLine />
            <div className="h-[7px] shrink-0 overflow-hidden">
                <StatusBar />
            </div>
            <Watermark />
        </div>
    );
}
